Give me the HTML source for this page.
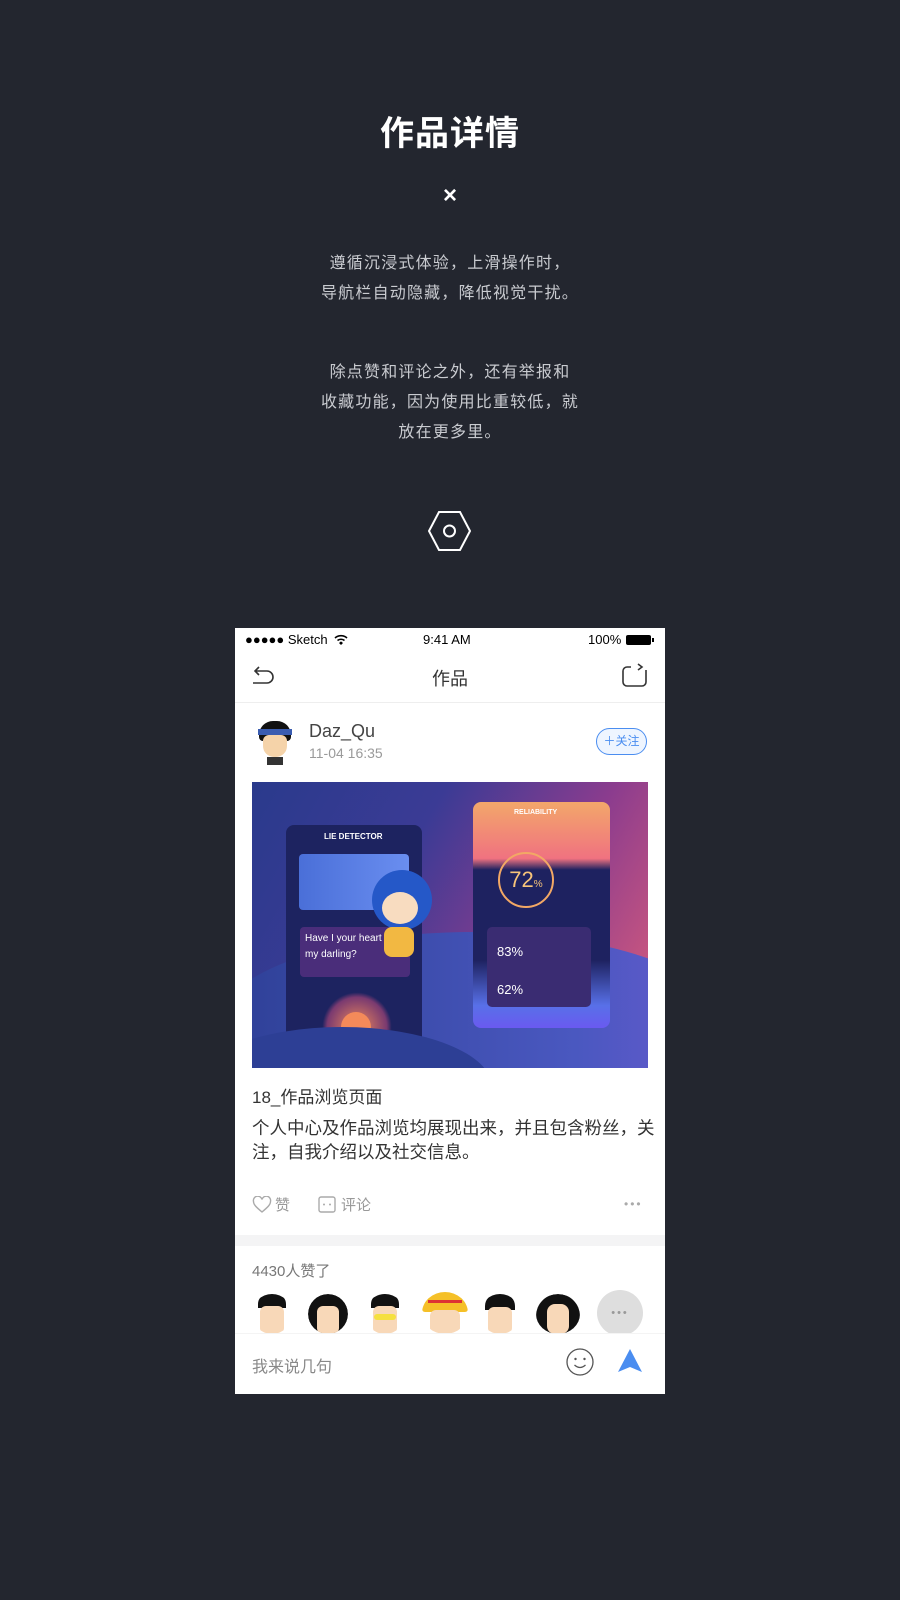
<!DOCTYPE html>
<html><head><meta charset="utf-8"><style>
*{margin:0;padding:0;box-sizing:border-box}
body{width:900px;height:1600px;background:#23262f;font-family:"Liberation Sans","Noto Sans CJK SC",sans-serif;position:relative;overflow:hidden}
.a{position:absolute}
.c{left:0;width:900px;text-align:center}
.p{color:#c9cbd0;font-size:16px;line-height:30px;letter-spacing:1.2px}
.ph{left:235px;top:628px;width:430px;height:766px;background:#fff;overflow:hidden}
.av{width:40px;height:40px;border-radius:50%;background:#fff;overflow:hidden}
</style></head><body>
<div class="a c" style="top:106px;color:#fff;font-size:34px;font-weight:bold;letter-spacing:1px">作品详情</div>
<div class="a c" style="top:182px;color:#fff;font-size:24px;font-weight:bold">×</div>
<div class="a c p" style="top:249px">遵循沉浸式体验，上滑操作时，<br>导航栏自动隐藏，降低视觉干扰。</div>
<div class="a c p" style="top:358px">除点赞和评论之外，还有举报和<br>收藏功能，因为使用比重较低，就<br>放在更多里。</div>
<svg class="a" style="left:428px;top:510px" width="43" height="42" viewBox="0 0 43 42"><polygon points="11,2 32,2 42,21 32,40 11,40 1,21" fill="none" stroke="#fff" stroke-width="2"/><circle cx="21.5" cy="21" r="5.5" fill="none" stroke="#fff" stroke-width="2"/></svg>

<div class="a ph">
 <div class="a" style="left:10px;top:4px;font-size:13px;color:#000">●●●●● Sketch</div>
 <svg class="a" style="left:99px;top:6px" width="14" height="11" viewBox="0 0 14 11"><path d="M1 4a9 9 0 0 1 12 0M3.5 6.5a5.5 5.5 0 0 1 7 0" fill="none" stroke="#000" stroke-width="1.6"/><path d="M5 9l2-1.6L9 9 7 11z" fill="#000"/></svg>
 <div class="a" style="left:188px;top:4px;font-size:13px;color:#000">9:41 AM</div>
 <div class="a" style="left:353px;top:4px;font-size:13px;color:#000">100%</div>
 <div class="a" style="left:391px;top:7px;width:25px;height:10px;background:#000;border-radius:2px"></div>
 <div class="a" style="left:417px;top:10px;width:2px;height:4px;background:#000"></div>
 <svg class="a" style="left:16px;top:34px" width="26" height="26" viewBox="0 0 26 26"><path d="M2 21h14a6 6 0 0 0 0-12H5M8 5L4 9l4 4" fill="none" stroke="#333" stroke-width="1.6"/></svg>
 <div class="a" style="left:0;width:430px;text-align:center;top:37px;font-size:18px;color:#333">作品</div>
 <svg class="a" style="left:386px;top:34px" width="28" height="26" viewBox="0 0 28 26"><path d="M10 5H6a4 4 0 0 0-4 4v11a4 4 0 0 0 4 4h15a4 4 0 0 0 4-4V8M17 2l4 3-4 3" fill="none" stroke="#333" stroke-width="1.6"/></svg>
 <div class="a" style="left:0;top:74px;width:430px;height:1px;background:#eee"></div>
 <div class="a av" style="left:18px;top:89px;width:44px;height:48px;border-radius:0">
  <div class="a" style="left:6px;top:4px;width:32px;height:20px;background:#111;border-radius:14px 14px 4px 4px"></div>
  <div class="a" style="left:5px;top:12px;width:34px;height:6px;background:#3a5cb0"></div>
  <div class="a" style="left:10px;top:18px;width:24px;height:22px;background:#f5d3a9;border-radius:6px 6px 11px 11px"></div>
  <div class="a" style="left:14px;top:40px;width:16px;height:8px;background:#333"></div>
 </div>
 <div class="a" style="left:74px;top:93px;font-size:18px;color:#444">Daz_Qu</div>
 <div class="a" style="left:74px;top:117px;font-size:14px;color:#9a9a9a">11-04 16:35</div>
 <div class="a" style="left:361px;top:100px;width:51px;height:27px;border:1px solid #4a8df0;border-radius:14px;background:#eef5ff;color:#4a8df0;font-size:12px;line-height:25px;text-align:center">＋关注</div>
 <div class="a" style="left:17px;top:154px;width:396px;height:286px;overflow:hidden;background:linear-gradient(120deg,#2a3a8c 0%,#3b3b95 35%,#8b3c8e 65%,#e0607a 100%)">
  <div class="a" style="left:-40px;top:150px;width:520px;height:200px;border-radius:50%;background:linear-gradient(90deg,#2d3f95,#4a58c0 70%,#6a5ad0)"></div>
  <div class="a" style="left:34px;top:43px;width:136px;height:220px;background:#1d2360;border-radius:8px"></div>
  <div class="a" style="left:72px;top:50px;color:#fff;font-size:8px;font-weight:bold">LIE DETECTOR</div>
  <div class="a" style="left:47px;top:72px;width:110px;height:56px;background:linear-gradient(90deg,#4a6fd8,#6a8ef0);border-radius:4px"></div>
  <div class="a" style="left:48px;top:145px;width:110px;height:50px;background:#4a2d7a;border-radius:4px;color:#fff;font-size:10px;padding:4px 5px;line-height:16px">Have I your heart<br>my darling?</div>
  <div class="a" style="left:70px;top:210px;width:70px;height:70px;border-radius:50%;background:radial-gradient(#f08a5a,#7a3a70 60%,transparent 70%)"></div>
  <div class="a" style="left:89px;top:230px;width:30px;height:30px;border-radius:50%;background:#f48a5a"></div>
  <div class="a" style="left:-60px;top:245px;width:300px;height:120px;border-radius:50%;background:#2d3f95"></div>
  <div class="a" style="left:221px;top:20px;width:137px;height:226px;border-radius:8px;background:linear-gradient(180deg,#f3a76a 0%,#f07280 25%,#1e2260 30%,#1e2260 70%,#5870e8 90%,#6a5af0)"></div>
  <div class="a" style="left:262px;top:27px;color:#fff;font-size:7px;font-weight:bold">RELIABILITY</div>
  <div class="a" style="left:246px;top:70px;width:56px;height:56px;border-radius:50%;border:2px solid #f2a865;color:#f7c47a;font-size:22px;text-align:center;line-height:52px">72<span style="font-size:10px">%</span></div>
  <div class="a" style="left:235px;top:145px;width:104px;height:80px;background:#3a2c72;border-radius:5px;color:#fff;font-size:13px;padding:6px 10px;line-height:38px">83%<br>62%</div>
  <div class="a" style="left:120px;top:88px;width:60px;height:60px;border-radius:50%;background:#2558c8"></div>
  <div class="a" style="left:130px;top:110px;width:36px;height:32px;border-radius:50%;background:#f8dcc0"></div>
  <div class="a" style="left:132px;top:145px;width:30px;height:30px;border-radius:8px;background:#f2b842"></div>
 </div>
 <div class="a" style="left:17px;top:455px;font-size:17px;color:#333">18_作品浏览页面</div>
 <div class="a" style="left:17px;top:488px;width:410px;font-size:17.5px;color:#333;line-height:24px">个人中心及作品浏览均展现出来，并且包含粉丝，关注，自我介绍以及社交信息。</div>
 <svg class="a" style="left:17px;top:568px" width="20" height="18" viewBox="0 0 20 18"><path d="M10 16C4 11 1.5 8.5 1.5 5.5A4 4 0 0 1 10 3.5 4 4 0 0 1 18.5 5.5C18.5 8.5 16 11 10 16z" fill="none" stroke="#aaa" stroke-width="1.4"/></svg>
 <div class="a" style="left:40px;top:566px;font-size:15px;color:#999">赞</div>
 <svg class="a" style="left:83px;top:568px" width="18" height="17" viewBox="0 0 18 17"><rect x="1" y="1" width="16" height="15" rx="2" fill="none" stroke="#aaa" stroke-width="1.4"/><circle cx="6" cy="8.5" r="1" fill="#aaa"/><circle cx="12" cy="8.5" r="1" fill="#aaa"/></svg>
 <div class="a" style="left:106px;top:566px;font-size:15px;color:#999">评论</div>
 <div class="a" style="left:389px;top:569px;font-size:12px;color:#aaa;letter-spacing:2px">•••</div>
 <div class="a" style="left:0;top:607px;width:430px;height:11px;background:#f4f4f5"></div>
 <div class="a" style="left:17px;top:632px;font-size:15px;color:#777">4430人赞了</div>
 <div class="a av" style="left:17px;top:666px"><div class="a" style="left:6px;top:0;width:28px;height:14px;background:#111;border-radius:10px 10px 0 0"></div><div class="a" style="left:8px;top:12px;width:24px;height:28px;background:#f8d8b8;border-radius:6px"></div></div>
 <div class="a av" style="left:73px;top:666px"><div class="a" style="left:0;top:0;width:40px;height:40px;background:#111;border-radius:50%"></div><div class="a" style="left:9px;top:12px;width:22px;height:28px;background:#f8d8b8;border-radius:6px"></div></div>
 <div class="a av" style="left:130px;top:666px"><div class="a" style="left:6px;top:0;width:28px;height:14px;background:#111;border-radius:10px 10px 0 0"></div><div class="a" style="left:8px;top:12px;width:24px;height:28px;background:#f8d8b8;border-radius:6px"></div><div class="a" style="left:9px;top:20px;width:22px;height:6px;background:#f5e040;border-radius:3px"></div></div>
 <div class="a av" style="left:187px;top:664px;width:46px;height:42px"><div class="a" style="left:0;top:0;width:46px;height:20px;background:#f5c028;border-radius:22px 22px 4px 4px"></div><div class="a" style="left:6px;top:8px;width:34px;height:3px;background:#d33"></div><div class="a" style="left:8px;top:18px;width:30px;height:24px;background:#f8d8b8;border-radius:6px"></div></div>
 <div class="a av" style="left:245px;top:666px"><div class="a" style="left:5px;top:0;width:30px;height:16px;background:#111;border-radius:12px 12px 0 0"></div><div class="a" style="left:8px;top:13px;width:24px;height:27px;background:#f8d8b8;border-radius:6px"></div></div>
 <div class="a av" style="left:301px;top:666px;width:44px"><div class="a" style="left:0;top:0;width:44px;height:44px;background:#111;border-radius:50%"></div><div class="a" style="left:11px;top:10px;width:22px;height:30px;background:#f8d8b8;border-radius:8px"></div></div>
 <div class="a" style="left:362px;top:662px;width:46px;height:46px;border-radius:50%;background:#dedede;color:#999;font-size:11px;text-align:center;line-height:46px;letter-spacing:2px">•••</div>
 <div class="a" style="left:0;top:705px;width:430px;height:61px;background:#fff;border-top:1px solid #f4f4f4"></div>
 <div class="a" style="left:17px;top:725px;font-size:16px;color:#888">我来说几句</div>
 <svg class="a" style="left:330px;top:719px" width="30" height="30" viewBox="0 0 30 30"><circle cx="15" cy="15" r="13" fill="none" stroke="#555" stroke-width="1.3"/><circle cx="10.5" cy="12" r="1.2" fill="#555"/><circle cx="19.5" cy="12" r="1.2" fill="#555"/><path d="M9.5 18q5.5 5 11 0" fill="none" stroke="#555" stroke-width="1.3"/></svg>
 <svg class="a" style="left:381px;top:719px" width="28" height="28" viewBox="0 0 28 28"><path d="M14 2L26 25 14 20 2 25z" fill="#4a8df0"/></svg>
</div>
</body></html>
